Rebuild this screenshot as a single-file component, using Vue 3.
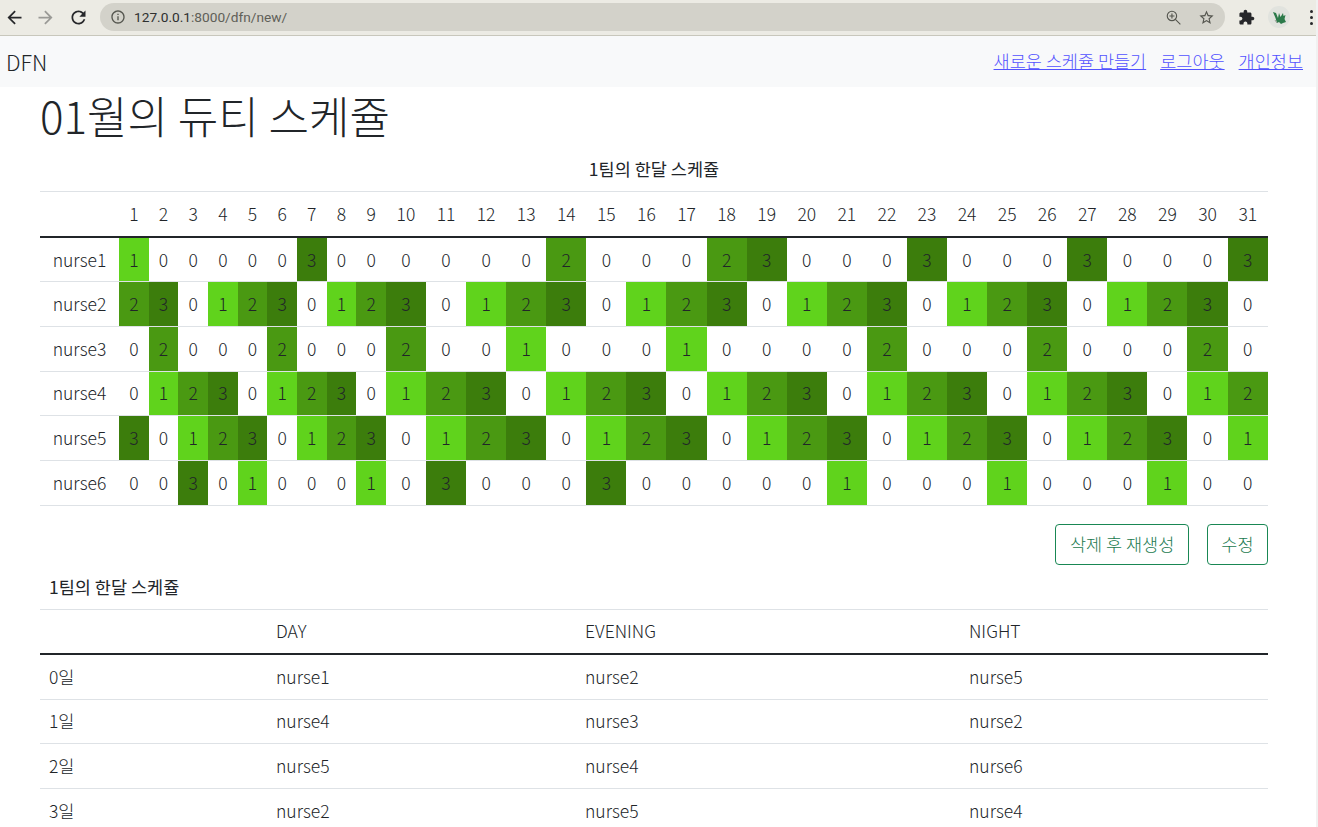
<template>
  <div class="window">
    <header class="chrome">
      <svg class="ic back" viewBox="0 0 24 24"><path d="M20 11H7.83l5.59-5.59L12 4l-8 8 8 8 1.41-1.41L7.83 13H20v-2z" /></svg>
      <svg class="ic fwd" viewBox="0 0 24 24"><path d="M12 4l-1.41 1.41L16.17 11H4v2h12.17l-5.58 5.59L12 20l8-8z" /></svg>
      <svg class="ic reload" viewBox="0 0 24 24"><path d="M17.65 6.35C16.2 4.9 14.21 4 12 4c-4.42 0-7.99 3.58-7.99 8s3.57 8 7.99 8c3.73 0 6.84-2.55 7.73-6h-2.08c-.82 2.33-3.04 4-5.65 4-3.31 0-6-2.69-6-6s2.69-6 6-6c1.66 0 3.14.69 4.22 1.78L13 11h7V4l-2.35 2.35z" /></svg>
      <div class="omnibox">
        <svg class="info" viewBox="0 0 24 24"><path d="M11 7h2v2h-2zm0 4h2v6h-2zm1-9C6.48 2 2 6.48 2 12s4.48 10 10 10 10-4.48 10-10S17.52 2 12 2zm0 18c-4.41 0-8-3.59-8-8s3.59-8 8-8 8 3.59 8 8-3.59 8-8 8z" /></svg>
        <span class="url"><span class="host">127.0.0.1</span>:8000/dfn/new/</span>
        <svg class="zoom" viewBox="0 0 24 24">
          <circle cx="9.5" cy="9.5" r="7.5" fill="none" stroke="#55564f" stroke-width="1.8" />
          <path d="M15 15l8 8M9.5 5.5v8M5.5 9.5h8" fill="none" stroke="#55564f" stroke-width="1.8" />
        </svg>
        <svg class="star" viewBox="0 0 24 24"><path d="M22 9.24l-7.19-.62L12 2 9.19 8.63 2 9.24l5.46 4.73L5.82 21 12 17.27 18.18 21l-1.63-7.03L22 9.24zM12 15.4l-3.76 2.27 1-4.28-3.32-2.88 4.38-.38L12 6.1l1.71 4.04 4.38.38-3.32 2.88 1 4.28L12 15.4z" /></svg>
      </div>
      <svg class="puzzle" viewBox="0 0 24 24"><path d="M20.5 11H19V7c0-1.1-.9-2-2-2h-4V3.5C13 2.12 11.88 1 10.5 1S8 2.12 8 3.5V5H4c-1.1 0-1.99.9-1.99 2v3.8H3.5c1.49 0 2.7 1.21 2.7 2.7s-1.21 2.7-2.7 2.7H2V20c0 1.1.9 2 2 2h3.8v-1.5c0-1.49 1.21-2.7 2.7-2.7 1.49 0 2.7 1.21 2.7 2.7V22H17c1.1 0 2-.9 2-2v-4h1.5c1.38 0 2.5-1.12 2.5-2.5S21.88 11 20.5 11z" /></svg>
      <svg class="avatar" viewBox="0 0 22 22">
        <circle cx="11" cy="11" r="11" fill="#e1e3de" />
        <path d="M5 6l3 1 2 5 1-5 1.5 4L15 7l.5 3 2-1-1 4 1.5 3-3 1-2 1-2-2-2 1-1.5-5z" fill="#2c7a4a" />
        <path d="M9 17l-2-3" stroke="#9a9f96" stroke-width="1" />
      </svg>
      <div class="dots"><i></i><i></i><i></i></div>
    </header>

    <nav class="topnav">
      <span class="brand">DFN</span>
      <div class="links">
        <a href="#">새로운 스케쥴 만들기</a>
        <a href="#">로그아웃</a>
        <a href="#">개인정보</a>
      </div>
    </nav>

    <main class="content">
      <h1>{{ title }}</h1>

      <table class="month">
        <caption>1팀의 한달 스케쥴</caption>
        <colgroup>
          <col class="col-name" />
          <col v-for="d in days" :key="d" :class="d < 10 ? 'col-one' : 'col-two'" />
        </colgroup>
        <thead>
          <tr>
            <th></th>
            <th v-for="d in days" :key="d">{{ d }}</th>
          </tr>
        </thead>
        <tbody>
          <tr v-for="row in schedule" :key="row.name">
            <td class="nurse">{{ row.name }}</td>
            <td v-for="(s, i) in row.shifts" :key="i" :class="'s' + s">{{ s }}</td>
          </tr>
        </tbody>
      </table>

      <div class="actions">
        <button>삭제 후 재생성</button>
        <button>수정</button>
      </div>

      <table class="daily">
        <caption>1팀의 한달 스케쥴</caption>
        <colgroup>
          <col class="c1" /><col class="c2" /><col class="c3" /><col class="c4" />
        </colgroup>
        <thead>
          <tr><th></th><th>DAY</th><th>EVENING</th><th>NIGHT</th></tr>
        </thead>
        <tbody>
          <tr v-for="(r, i) in daily" :key="i">
            <td>{{ i }}일</td>
            <td v-for="n in r" :key="n">{{ n }}</td>
          </tr>
        </tbody>
      </table>
    </main>
  </div>
</template>

<script setup>
const title = '01월의 듀티 스케쥴'
const days = Array.from({ length: 31 }, (_, i) => i + 1)

const rows = {
  nurse1: '1000003000000200023000300030003',
  nurse2: '2301230123012301230123012301230',
  nurse3: '0200020002001000100002000200020',
  nurse4: '0123012301230123012301230123012',
  nurse5: '3012301230123012301230123012301',
  nurse6: '0030100010300030000010001000100',
}
const schedule = Object.entries(rows).map(([name, s]) => ({ name, shifts: s.split('') }))

const daily = [
  ['nurse1', 'nurse2', 'nurse5'],
  ['nurse4', 'nurse3', 'nurse2'],
  ['nurse5', 'nurse4', 'nurse6'],
  ['nurse2', 'nurse5', 'nurse4'],
]
</script>

<style>
html, body { margin: 0; overflow: hidden; }
</style>

<style scoped>
.window {
  height: 827px;
  overflow: hidden;
  font-family: "Noto Sans CJK KR", "Noto Sans", sans-serif;
  font-size: 17.5px;
  font-weight: 300;
  line-height: 1.5;
  color: #212529;
  background: #fff;
  border-right: 2px solid #f1f1f1;
  box-sizing: border-box;
}

/* browser bar */
.chrome {
  height: 36px;
  box-sizing: border-box;
  background: #ecebe4;
  border-bottom: 1px solid #c8c7bc;
  margin-right: -2px;
  display: flex;
  align-items: center;
  padding: 0 6px 1px 4px;
}
.ic { width: 21px; height: 21px; fill: #26272a; flex: none; }
.back { margin-right: 10px; }
.fwd { fill: #9a9a96; margin-right: 12px; }
.reload { margin-right: 11px; }
.omnibox {
  width: 1125px;
  height: 28px;
  flex: none;
  border-radius: 14px;
  background: #d3d2ca;
  display: flex;
  align-items: center;
  padding: 0 10px;
  box-sizing: border-box;
  font-family: "Roboto", sans-serif;
  font-size: 13.7px;
  font-weight: 400;
  color: #5f6058;
}
.host { color: #2e3030; }
.info { width: 16px; height: 16px; fill: #55564f; margin-right: 8px; }
.url { flex: 1; }
.zoom { width: 15px; height: 15px; margin-right: 17px; }
.star { width: 17px; height: 17px; fill: #55564f; }
.puzzle { width: 17px; height: 17px; fill: #26272a; margin-left: 13px; flex: none; }
.avatar { width: 22px; height: 22px; margin-left: 13px; flex: none; }
.dots { display: flex; flex-direction: column; gap: 3px; margin-left: 20px; }
.dots i { width: 3px; height: 3px; border-radius: 50%; background: #26272a; }

/* site nav */
.topnav {
  height: 51px;
  background: #f8f9fa;
  display: flex;
  justify-content: space-between;
  align-items: center;
  padding: 0 13px 0 6px;
}
.brand { font-size: 21.6px; padding-top: 2px; }
.links { display: flex; gap: 14px; padding-bottom: 1px; }
.links a { color: #5252ff; text-decoration: underline; }

/* page body */
.content { padding: 0 48px 0 40px; }
h1 {
  margin: 0 0 4px;
  font-size: 44px;
  font-weight: 300;
  line-height: 56px;
}
table {
  width: 100%;
  border-collapse: collapse;
  table-layout: fixed;
}
caption {
  caption-side: top;
  font-weight: 400;
  padding: 9px;
  line-height: 26px;
}
.month caption { text-align: center; }
.daily caption { text-align: left; }
th, td {
  font-weight: 300;
  height: 44.7px;
  box-sizing: border-box;
  padding: 0 9px;
  border-bottom: 1px solid #dee2e6;
}
thead tr { border-top: 1px solid #dee2e6; }
thead th { border-bottom: 2px solid #212529; }
.month th { height: 45.7px; }
.daily th { height: 45px; }
.month th, .month td { text-align: center; padding: 0; }
.col-name { width: 79px; }
.col-one { width: 29.67px; }
.col-two { width: 40.09px; }
.s1 { background: #60d31c; }
.s2 { background: #4a9912; }
.s3 { background: #3c7d0c; }
.c1 { width: 227px; }
.c2 { width: 309px; }
.c3 { width: 384px; }
.c4 { width: 308px; }
.daily th, .daily td { text-align: left; }

.actions {
  display: flex;
  justify-content: flex-end;
  gap: 18px;
  margin-top: 18px;
}
button {
  height: 41px;
  padding: 0 13.5px;
  background: #fff;
  border: 1px solid #198754;
  border-radius: 4px;
  color: #1a7a50;
  font: inherit;
}
</style>
